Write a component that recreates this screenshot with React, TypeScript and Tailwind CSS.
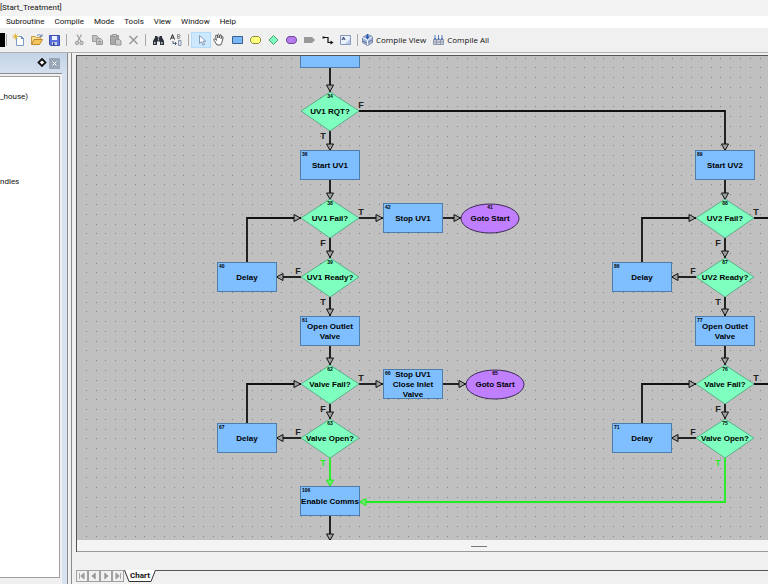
const ARIAL = "font-['Liberation_Sans',Arial,sans-serif]";

type Shape = 'block' | 'decision' | 'goto';

interface ChartNode {
    id: string;
    shape: Shape;
    x: number;
    y: number;
    lines: string[];
}

interface Wire {
    points: number[][];
    live?: boolean;
    open?: boolean;
}

interface Tag {
    text: string;
    x: number;
    y: number;
    live?: boolean;
}

// chart coordinates of the top left corner of the visible area
const SCROLL = { x: 77, y: 56 };
const GRID = 9.765;

// x and y are the centre of each node
const nodes: ChartNode[] = [
    { id: '', shape: 'block', x: 330, y: 53, lines: [] },
    { id: '34', shape: 'decision', x: 330, y: 111, lines: ['UV1 RQT?'] },
    { id: '36', shape: 'block', x: 330, y: 165, lines: ['Start UV1'] },
    { id: '38', shape: 'decision', x: 330, y: 218, lines: ['UV1 Fail?'] },
    { id: '42', shape: 'block', x: 413, y: 218, lines: ['Stop UV1'] },
    { id: '41', shape: 'goto', x: 490, y: 218, lines: ['Goto Start'] },
    { id: '40', shape: 'block', x: 247, y: 277, lines: ['Delay'] },
    { id: '39', shape: 'decision', x: 330, y: 277, lines: ['UV1 Ready?'] },
    { id: '61', shape: 'block', x: 330, y: 331, lines: ['Open Outlet', 'Valve'] },
    { id: '62', shape: 'decision', x: 330, y: 384, lines: ['Valve Fail?'] },
    { id: '66', shape: 'block', x: 413, y: 384, lines: ['Stop UV1', 'Close Inlet', 'Valve'] },
    { id: '65', shape: 'goto', x: 495, y: 384, lines: ['Goto Start'] },
    { id: '67', shape: 'block', x: 247, y: 438, lines: ['Delay'] },
    { id: '63', shape: 'decision', x: 330, y: 438, lines: ['Valve Open?'] },
    { id: '106', shape: 'block', x: 330, y: 501, lines: ['Enable Comms'] },
    { id: '89', shape: 'block', x: 725, y: 165, lines: ['Start UV2'] },
    { id: '88', shape: 'decision', x: 725, y: 218, lines: ['UV2 Fail?'] },
    { id: '86', shape: 'block', x: 642, y: 277, lines: ['Delay'] },
    { id: '87', shape: 'decision', x: 725, y: 277, lines: ['UV2 Ready?'] },
    { id: '77', shape: 'block', x: 725, y: 331, lines: ['Open Outlet', 'Valve'] },
    { id: '76', shape: 'decision', x: 725, y: 384, lines: ['Valve Fail?'] },
    { id: '71', shape: 'block', x: 642, y: 438, lines: ['Delay'] },
    { id: '75', shape: 'decision', x: 725, y: 438, lines: ['Valve Open?'] },
];

const wires: Wire[] = [
    { points: [[330, 68], [330, 92]] },
    { points: [[330, 130], [330, 151]] },
    { points: [[359, 111], [725, 111], [725, 151]] },
    { points: [[330, 180], [330, 200]] },
    { points: [[359, 218], [383, 218]] },
    { points: [[442, 218], [461, 218]] },
    { points: [[330, 237], [330, 258]] },
    { points: [[301, 277], [276, 277]] },
    { points: [[247, 262], [247, 218], [301, 218]] },
    { points: [[330, 297], [330, 316]] },
    { points: [[330, 346], [330, 365]] },
    { points: [[359, 384], [383, 384]] },
    { points: [[442, 384], [466, 384]] },
    { points: [[330, 403], [330, 419]] },
    { points: [[301, 438], [276, 438]] },
    { points: [[247, 423], [247, 384], [301, 384]] },
    { points: [[330, 457], [330, 487]], live: true },
    { points: [[330, 516], [330, 541]] },
    { points: [[725, 180], [725, 200]] },
    { points: [[754, 218], [1200, 218]], open: true },
    { points: [[725, 237], [725, 258]] },
    { points: [[696, 277], [671, 277]] },
    { points: [[642, 262], [642, 218], [696, 218]] },
    { points: [[725, 297], [725, 316]] },
    { points: [[725, 346], [725, 365]] },
    { points: [[754, 384], [1200, 384]], open: true },
    { points: [[725, 403], [725, 419]] },
    { points: [[696, 438], [671, 438]] },
    { points: [[642, 423], [642, 384], [696, 384]] },
    { points: [[725, 457], [725, 502], [359, 502]], live: true },
];

const tags: Tag[] = [
    { text: 'F', x: 361, y: 108 },
    { text: 'T', x: 323, y: 139 },
    { text: 'T', x: 361, y: 215 },
    { text: 'F', x: 323, y: 246 },
    { text: 'F', x: 298, y: 274 },
    { text: 'T', x: 323, y: 305 },
    { text: 'T', x: 361, y: 381 },
    { text: 'F', x: 323, y: 412 },
    { text: 'F', x: 298, y: 435 },
    { text: 'T', x: 323, y: 466, live: true },
    { text: 'T', x: 756, y: 215 },
    { text: 'F', x: 718, y: 246 },
    { text: 'F', x: 693, y: 274 },
    { text: 'T', x: 718, y: 305 },
    { text: 'T', x: 756, y: 381 },
    { text: 'F', x: 718, y: 412 },
    { text: 'F', x: 693, y: 435 },
    { text: 'T', x: 718, y: 466, live: true },
];

function gridPath() {
    let d = '';
    for (let row = 0; row < 50; row++) {
        for (let col = 0; col < 160; col++) {
            const x = Math.round(76 + (col + 1) * GRID);
            const y = Math.round(57.5 + row * GRID);
            d += `M${x} ${y}h1v1h-1z`;
        }
    }
    return d;
}

function WireLine({ points, live, open }: Wire) {
    const [px, py] = points[points.length - 2];
    const [x, y] = points[points.length - 1];
    const angle = (Math.atan2(y - py, x - px) * 180) / Math.PI;
    const stroke = live ? '#1ef01e' : '#111111';
    return (
        <g fill="none" stroke={stroke}>
            <polyline points={points.map((p) => p.join(',')).join(' ')} strokeWidth="1.8" />
            {!open && (
                <path
                    d="M-7 -3.5L-0.5 0L-7 3.5z"
                    transform={`translate(${x} ${y}) rotate(${angle})`}
                    fill={live ? '#6fe86f' : '#a0a0a0'}
                    strokeWidth="1"
                />
            )}
        </g>
    );
}

function NodeShape({ id, shape, x, y, lines }: ChartNode) {
    const first = y + 3 - (lines.length - 1) * 5;
    return (
        <g>
            {shape === 'block' && (
                <rect x={x - 29.5} y={y - 14.5} width="59" height="29" fill="#7fbfff" stroke="#4f7dab" />
            )}
            {shape === 'decision' && (
                <path d={`M${x} ${y - 19}L${x + 29} ${y}L${x} ${y + 20}L${x - 29} ${y}z`} fill="#7fffbf" stroke="#5cae8a" />
            )}
            {shape === 'goto' && (
                <ellipse cx={x} cy={y + 0.5} rx="29" ry="14.5" fill="#bf7fff" stroke="#3d2a52" />
            )}
            <text
                x={shape === 'block' ? x - 28 : x}
                y={shape === 'block' ? y - 9 : y - (shape === 'goto' ? 9 : 13)}
                textAnchor={shape === 'block' ? 'start' : 'middle'}
                className="text-[5px] font-bold"
            >
                {id}
            </text>
            <text textAnchor="middle" className="text-[8px] font-bold">
                {lines.map((line, i) => (
                    <tspan key={line} x={x} y={first + i * 10}>
                        {line}
                    </tspan>
                ))}
            </text>
        </g>
    );
}

function Chart() {
    return (
        <svg className={`block h-full w-full ${ARIAL}`} role="img" aria-label="Flowchart">
            <g transform={`translate(${-SCROLL.x} ${-SCROLL.y})`}>
                <path d={gridPath()} fill="#858585" />
                {wires.map((wire, i) => (
                    <WireLine key={i} {...wire} />
                ))}
                {nodes.map((node, i) => (
                    <NodeShape key={i} {...node} />
                ))}
                {tags.map((tag, i) => (
                    <text
                        key={i}
                        x={tag.x}
                        y={tag.y}
                        textAnchor="middle"
                        fill={tag.live ? '#1ef01e' : '#222222'}
                        className="text-[9px] font-bold"
                    >
                        {tag.text}
                    </text>
                ))}
            </g>
        </svg>
    );
}

const icons = {
    new: (
        <>
            <path d="M4.500 3.500h5l2 2v7h-7z" fill="#fff" stroke="#7b9bc8" />
            <path d="M9.500 3.500v2h2" fill="none" stroke="#5b7fb5" />
            <path d="M3.500 0.500v6M0.500 3.500h6M1.500 1.500l4 4M5.500 1.500l-4 4" stroke="#e3bd4a" />
        </>
    ),
    open: (
        <>
            <path d="M1.500 11.500v-8h4l1 1h4v2" fill="#f8dc8c" stroke="#c99d45" />
            <path d="M1.500 11.500l2.500-5h8.500l-3 5z" fill="#f6c65c" stroke="#b98a2c" />
            <path d="M7 2.500q2.500-2 4.500 0.500M12 1v2.500h-2.500" fill="none" stroke="#6f88ae" />
        </>
    ),
    save: (
        <>
            <path d="M1.500 2.500h10v10h-9l-1-1z" fill="#5a6fd8" stroke="#3c4cae" />
            <path d="M4 3h5v4h-5z" fill="#eef3ff" />
            <path d="M4 9h5v3h-5z" fill="#c9d3ee" />
            <path d="M5 9.500h1.500v2.500h-1.500z" fill="#26357f" />
        </>
    ),
    cut: (
        <g fill="none" stroke="#a3a3a3" strokeWidth="1.300">
            <path d="M4 1.500l4 7M8.500 1.500l-4 7" />
            <circle cx="4" cy="10" r="1.500" />
            <circle cx="8.500" cy="10" r="1.500" />
        </g>
    ),
    copy: (
        <g fill="#c4c4c4" stroke="#9a9a9a">
            <path d="M1.500 2.500h4l2 2v4h-6z" />
            <path d="M5.500 5.500h4l2 2v4h-6z" />
            <path d="M7 8.500h3M7 10h3" />
        </g>
    ),
    paste: (
        <g fill="#a8a8a8" stroke="#969696">
            <path d="M1.500 2.500h8v9h-8z" />
            <path d="M3.500 1.500h4v2h-4z" fill="#d0d0d0" />
            <path d="M6.500 6.500h4l1.500 1.500v4h-5.500z" fill="#c8c8c8" />
        </g>
    ),
    remove: <path d="M2.500 3l8 8M10.500 3l-8 8" stroke="#8f8f8f" strokeWidth="1.200" fill="none" />,
    find: (
        <g fill="#2b3038">
            <path d="M3 3h2.500v1.500h2v-1.500h2.500v1.500l2 3.500v4h-4v-3.500h-3v3.500h-4v-4l2-3.500z" />
            <path d="M2 9h1.500v2h-1.500zM9 9h1.500v2h-1.500zM6 5.500h1v2h-1z" fill="#b4bccb" />
        </g>
    ),
    replace: (
        <>
            <path d="M0.500 6.500l2-5l2 5M1.500 5h2" fill="none" stroke="#222" />
            <path d="M7.500 1.500v4h1.500a1 1 0 0 0 0-2h-1.500M9 3.500a1 1 0 0 0 0-2h-1.500" fill="none" stroke="#777" strokeWidth="0.800" />
            <path d="M3 8v2.500h3M5 9l1.500 1.500l-1.500 1.500" fill="none" stroke="#54637c" />
            <path d="M8.500 7.500h2.500v5h-2.500z" fill="#dfe6f2" stroke="#8593ab" />
        </>
    ),
    pointer: <path d="M4.500 2.500v8l2-1.800l1.500 3.500l1.500-0.500l-1.500-3.500h2.700z" fill="#fff" stroke="#7a91ad" strokeWidth="0.900" />,
    hand: (
        <path
            d="M4 12l-3-4.700q-0.700-1.500 0.500-1.600q0.900 0.100 2 1.700l-1-4.200q0-1.300 1-1q0.600 0.200 1.200 2.700v-3.200q0.800-1.200 1.500 0v3.200l1-2.900q1-0.800 1.300 0.400l-0.500 3.300l1-1.900q1.200-0.500 1.200 0.800l-1.300 4.700l-1.200 2.700z"
            fill="#fff"
            stroke="#4a4a4a"
            strokeWidth="0.900"
        />
    ),
    action: <path d="M1.500 3.500h10v7h-10z" fill="#7ab8f5" stroke="#38618c" />,
    condition: <path d="M3.500 3.500h6l2 2v3l-2 2h-6l-2-2v-3z" fill="#ffff7e" stroke="#8d8b45" />,
    decision: <path d="M6.500 2.500l4.500 4.500l-4.500 4.500l-4.500-4.500z" fill="#7fffbf" stroke="#4a9a78" />,
    goto: <path d="M4 3.500h5q2.500 0.500 2.500 3.500t-2.500 3.500h-5q-2.500-0.500-2.500-3.500t2.500-3.500z" fill="#b878ee" stroke="#704a94" />,
    label: <path d="M1 4h8l3 3l-3 3h-8z" fill="#999" />,
    wire: (
        <>
            <path d="M3 4.500h4v5h3" fill="none" stroke="#111" strokeWidth="1.200" />
            <path d="M1.500 3.500h2v2h-2zM12.500 9.500l-3-2v4z" fill="#111" />
        </>
    ),
    text: (
        <>
            <path d="M1.500 2.500h10v9h-10z" fill="#eaf1fb" stroke="#8499bd" />
            <path d="M6 11l5-5v5z" fill="#b9cbe8" />
            <path d="M3 7l1.500-3l1.500 3M3.500 6h2" stroke="#2a3c66" fill="none" strokeWidth="0.900" />
        </>
    ),
    compileView: (
        <>
            <path d="M1.500 4.500l5-3l5 2v6l-5 3l-5-3z" fill="#a9bbdb" stroke="#7787a6" />
            <path d="M1.500 4.500l5 2.500l5-3.500M6.500 7v5" fill="none" stroke="#f2f6ff" />
            <path d="M2 8l4 2M7 9.500l4-2.500" stroke="#5f7297" />
            <path d="M6.500 1v4M5 3.500l1.500 2l1.500-2" fill="none" stroke="#2357b8" strokeWidth="1.200" />
        </>
    ),
    compileAll: (
        <>
            <path d="M1.500 6.500h10v5h-10z" fill="#c9d0dc" stroke="#8f99ab" />
            <path d="M2 9h9M4.500 7v4M8.500 7v4" stroke="#8f99ab" />
            <path d="M3 2v5M6.500 2v5M10 2v5" stroke="#5c7cba" />
            <path d="M2 5l1 2l1-2zM5.500 5l1 2l1-2zM9 5l1 2l1-2z" fill="#3d63ae" />
        </>
    ),
};

type IconName = keyof typeof icons;

function Icon({ name }: { name: IconName }) {
    return (
        <svg viewBox="0 0 13 14" className="h-3.5 w-[13px] shrink-0" aria-hidden="true">
            {icons[name]}
        </svg>
    );
}

function ToolButton({ name, label, active }: { name: IconName; label: string; active?: boolean }) {
    return (
        <button
            type="button"
            aria-label={label}
            className={
                active
                    ? 'flex h-3.5 w-[18px] items-center justify-center bg-[#cce8ff] outline outline-[#b3dcfb]'
                    : 'flex h-3.5 w-[18px] items-center justify-center'
            }
        >
            <Icon name={name} />
        </button>
    );
}

function Separator() {
    return <div className="mx-[3px] h-3 w-px bg-[#a8a8a8]" />;
}

function Toolbar() {
    return (
        <div className="flex h-6 items-center overflow-hidden bg-[#f0f0f0] font-['Open_Sans','Noto_Sans',sans-serif] whitespace-nowrap">
            <div className="h-3.5 w-[5px] bg-black" />
            <div className="ml-px h-3 w-px bg-[#a8a8a8]" />
            <div className="ml-0.5 flex">
                <ToolButton name="new" label="New" />
                <ToolButton name="open" label="Open" />
                <ToolButton name="save" label="Save" />
            </div>
            <Separator />
            <div className="flex">
                <ToolButton name="cut" label="Cut" />
                <ToolButton name="copy" label="Copy" />
                <ToolButton name="paste" label="Paste" />
                <ToolButton name="remove" label="Delete" />
            </div>
            <Separator />
            <div className="flex">
                <ToolButton name="find" label="Find" />
                <ToolButton name="replace" label="Replace" />
            </div>
            <Separator />
            <div className="flex">
                <ToolButton name="pointer" label="Select" active />
                <ToolButton name="hand" label="Pan" />
                <ToolButton name="action" label="Action block" />
                <ToolButton name="condition" label="OptoScript block" />
                <ToolButton name="decision" label="Condition block" />
                <ToolButton name="goto" label="Continue block" />
                <ToolButton name="label" label="Label" />
                <ToolButton name="wire" label="Connect" />
                <ToolButton name="text" label="Text" />
            </div>
            <Separator />
            <div className="flex gap-1.5">
                <button type="button" className="flex items-center gap-0.5">
                    <Icon name="compileView" />
                    Compile View
                </button>
                <button type="button" className="flex items-center gap-0.5">
                    <Icon name="compileAll" />
                    Compile All
                </button>
            </div>
        </div>
    );
}

function SidePanel() {
    return (
        <aside className="flex w-[68px] shrink-0 flex-col border-r border-[#8a8a8a] bg-[#d6e2f0]">
            <div className="flex h-5 shrink-0 items-center justify-end gap-0.5 bg-linear-to-b from-[#c3d3e6] to-[#d3e0ee] pr-[7px]">
                <button type="button" aria-label="Pin">
                    <svg viewBox="0 0 10 10" className="block size-2.5" aria-hidden="true">
                        <path d="M5 1L8.500 4.500L5 8L1.500 4.500z" fill="#fff" stroke="#111" strokeWidth="1.800" />
                    </svg>
                </button>
                <button type="button" aria-label="Close" className="flex size-[11px] items-center justify-center bg-[#98a6b5]">
                    <svg viewBox="0 0 5 5" className="block size-[5px]" aria-hidden="true">
                        <path d="M0.500 0.500l4 4M4.500 0.500l-4 4" stroke="#fff" />
                    </svg>
                </button>
            </div>
            <div className="mr-[5px] flex flex-1 flex-col border-t border-[#8a8f96] bg-[#f0f0f0] pt-0.5 pr-0.5">
                <div className="flex-1 border-t border-r border-b border-[#a0a0a0] bg-white">
                    <p className="pt-3.5">_house)</p>
                    <p className="pt-[73px]">ndles</p>
                </div>
                <div className="h-1.5" />
            </div>
        </aside>
    );
}

function SheetTabs() {
    const arrows = [
        { label: 'First', d: 'M3 2v7M8.500 2v7L4.500 5.500z' },
        { label: 'Previous', d: 'M7.500 2v7L3.500 5.500z' },
        { label: 'Next', d: 'M4.500 2v7L8.500 5.500z' },
        { label: 'Last', d: 'M9 2v7M3.500 2v7L7.500 5.500z' },
    ];
    return (
        <div className="flex h-[14px] bg-[#f0f0f0]">
            <div className="flex">
                {arrows.map(({ label, d }) => (
                    <button key={label} type="button" aria-label={label} className="h-3 w-3 border border-[#a0a0a0] bg-[#f0f0f0]">
                        <svg viewBox="0 0 12 11" className="block h-full w-full" aria-hidden="true">
                            <path d={d} fill="#999" stroke="#999" />
                        </svg>
                    </button>
                ))}
            </div>
            <div className="relative flex h-3 w-8 justify-center">
                <svg viewBox="0 0 32 12" className="absolute inset-0 h-full w-full" aria-hidden="true">
                    <path d="M0.500 0L5 11.500H27L31.500 0z" fill="#fff" />
                    <path d="M0.500 0L5 11.500H27L31.500 0" fill="none" stroke="#333" />
                </svg>
                <button type="button" className="relative leading-3 font-bold">
                    Chart
                </button>
            </div>
            <div className="flex-1 border-t border-[#555]" />
        </div>
    );
}

const menus = ['Subroutine', 'Compile', 'Mode', 'Tools', 'View', 'Window', 'Help'];

export default function App() {
    return (
        <div className="flex h-screen flex-col overflow-hidden bg-[#f0f0f0] font-[Roboto,'Noto_Sans',sans-serif] text-[8px] leading-3 text-[#111]">
            <header className="bg-[#f3f3f3]">
                <h1 className="h-4 pt-0.5">[Start_Treatment]</h1>
                <nav className="flex h-3 gap-2.5 bg-white pl-1.5">
                    {menus.map((menu) => (
                        <button key={menu} type="button">
                            {menu}
                        </button>
                    ))}
                </nav>
                <Toolbar />
            </header>
            <div className="flex min-h-0 flex-1 border-t border-[#b0b0b0]">
                <SidePanel />
                <main className="ml-[3px] flex min-w-0 flex-1 flex-col border-l border-[#8a8a8a] pt-0.5 pl-1">
                    <div className="flex min-h-0 flex-1 flex-col border-t border-l border-[#555]">
                        <div className="min-h-0 flex-1 bg-[#c0c0c0]">
                            <Chart />
                        </div>
                        <div className="h-3 shrink-0 border-b border-[#999] bg-[#f4f4f4]">
                            <div className="ml-[57%] h-[7px] w-4 border-b border-[#777]" />
                        </div>
                    </div>
                    <div className="h-[18px] shrink-0" />
                    <SheetTabs />
                </main>
            </div>
        </div>
    );
}
